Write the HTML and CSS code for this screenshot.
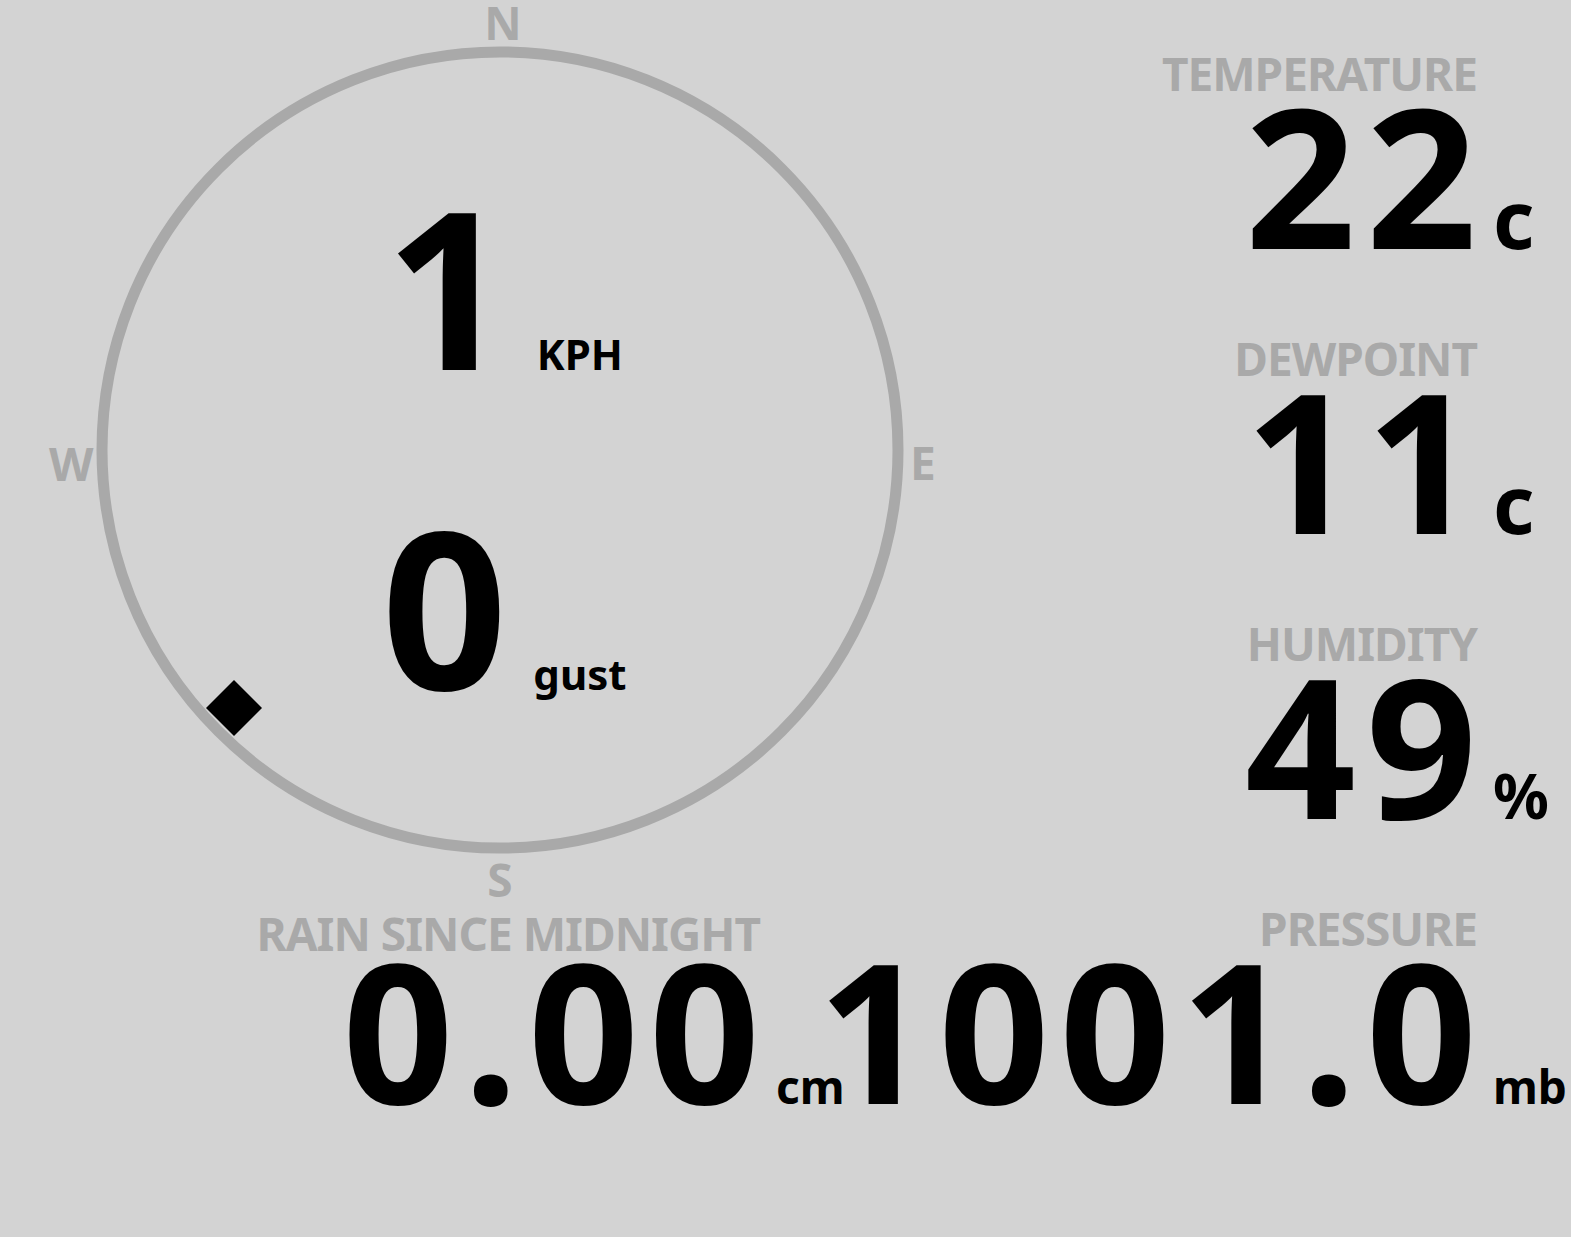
FILE: index.html
```html
<!DOCTYPE html>
<html>
<head>
    <title>Weather Station</title>
    <link rel="stylesheet" href="styles.css">
</head>
<body>
    <div class="dash">
        <!-- Vento -->
        <div class="compass">
            <svg class="dial" width="1000" height="905" viewBox="0 0 1000 905">
                <circle cx="500" cy="450" r="398" fill="none" stroke="#a9a9a9" stroke-width="11"/>
                <text x="503" y="40" text-anchor="middle" class="point">N</text>
                <text x="910" y="480" class="point">E</text>
                <text x="500" y="897" text-anchor="middle" class="point">S</text>
                <text x="49" y="481" class="point">W</text>
                <polygon points="234,680 262,708 234,736 206,708" fill="#000"/>
            </svg>
            <div class="wind">
                <div class="wind-row">
                    <span class="wind-num">1</span>
                    <span class="wind-unit">KPH</span>
                </div>
                <div class="wind-row">
                    <span class="wind-num">0</span>
                    <span class="wind-unit">gust</span>
                </div>
            </div>
        </div>

        <!-- Leituras -->
        <div class="readings">
            <div class="reading">
                <div class="label">TEMPERATURE</div>
                <div class="value"><span class="num">22</span><span class="unit unit-c">c</span></div>
            </div>
            <div class="reading">
                <div class="label">DEWPOINT</div>
                <div class="value"><span class="num">11</span><span class="unit unit-c">c</span></div>
            </div>
            <div class="reading">
                <div class="label">HUMIDITY</div>
                <div class="value"><span class="num">49</span><span class="unit unit-pct">%</span></div>
            </div>
        </div>

        <div class="reading rain">
            <div class="label">RAIN SINCE MIDNIGHT</div>
            <div class="value"><span class="num">0.00</span><span class="unit unit-sm">cm</span></div>
        </div>
        <div class="reading pressure">
            <div class="label">PRESSURE</div>
            <div class="value"><span class="num">1001.0</span><span class="unit unit-sm">mb</span></div>
        </div>
    </div>
</body>
</html>
```

FILE: styles.css
```css
/* Reset */
body {
    margin: 0;
    background-color: #d3d3d3;
    font-family: "Noto Sans", "Open Sans", sans-serif;
    font-weight: 700;
    color: #000;
}

/* Grade principal */
.dash {
    display: grid;
    grid-template-columns: 1000px 477px;
    grid-template-rows: 905px auto;
    align-items: end;
}

/* Bussola */
.compass {
    display: grid;
    align-self: start;
}

.dial,
.wind {
    grid-area: 1 / 1;
}

.dial {
    overflow: visible;
}

.point {
    font-family: "Noto Sans", sans-serif;
    font-weight: 700;
    font-size: 46px;
    fill: #a9a9a9;
}

.wind {
    display: flex;
    flex-direction: column;
    align-items: center;
    gap: 140px;
    padding-top: 195px;
    padding-left: 8px;
}

.wind-row {
    display: flex;
    align-items: baseline;
    gap: 20px;
    line-height: 180px;
}

.wind-num {
    font-size: 220px;
    letter-spacing: 6px;
}

.wind-unit {
    font-size: 42px;
    line-height: 42px;
}

/* Leituras da direita */
.readings {
    align-self: start;
    padding-top: 50px;
}

.reading {
    margin-bottom: 82px;
}

.label {
    font-size: 46px;
    line-height: 46px;
    letter-spacing: -1px;
    color: #a9a9a9;
    text-align: right;
    white-space: nowrap;
}

.value {
    display: flex;
    justify-content: flex-end;
    align-items: baseline;
    line-height: 157px;
    white-space: nowrap;
}

.num {
    font-size: 194px;
    letter-spacing: 10px;
    margin-right: -10px;
}

/* Unidades penduradas a direita do numero */
.unit {
    width: 0;
    line-height: 40px;
}

.unit-c {
    font-size: 80px;
    text-indent: 16px;
}

.unit-pct {
    font-size: 62px;
    text-indent: 16px;
}

.unit-sm {
    font-size: 46px;
    text-indent: 16px;
}

/* Linha de baixo */
.rain,
.pressure {
    margin-bottom: 0;
}

.rain {
    padding-right: 240px;
}

.rain .label {
    margin-bottom: -5px;
}
```
